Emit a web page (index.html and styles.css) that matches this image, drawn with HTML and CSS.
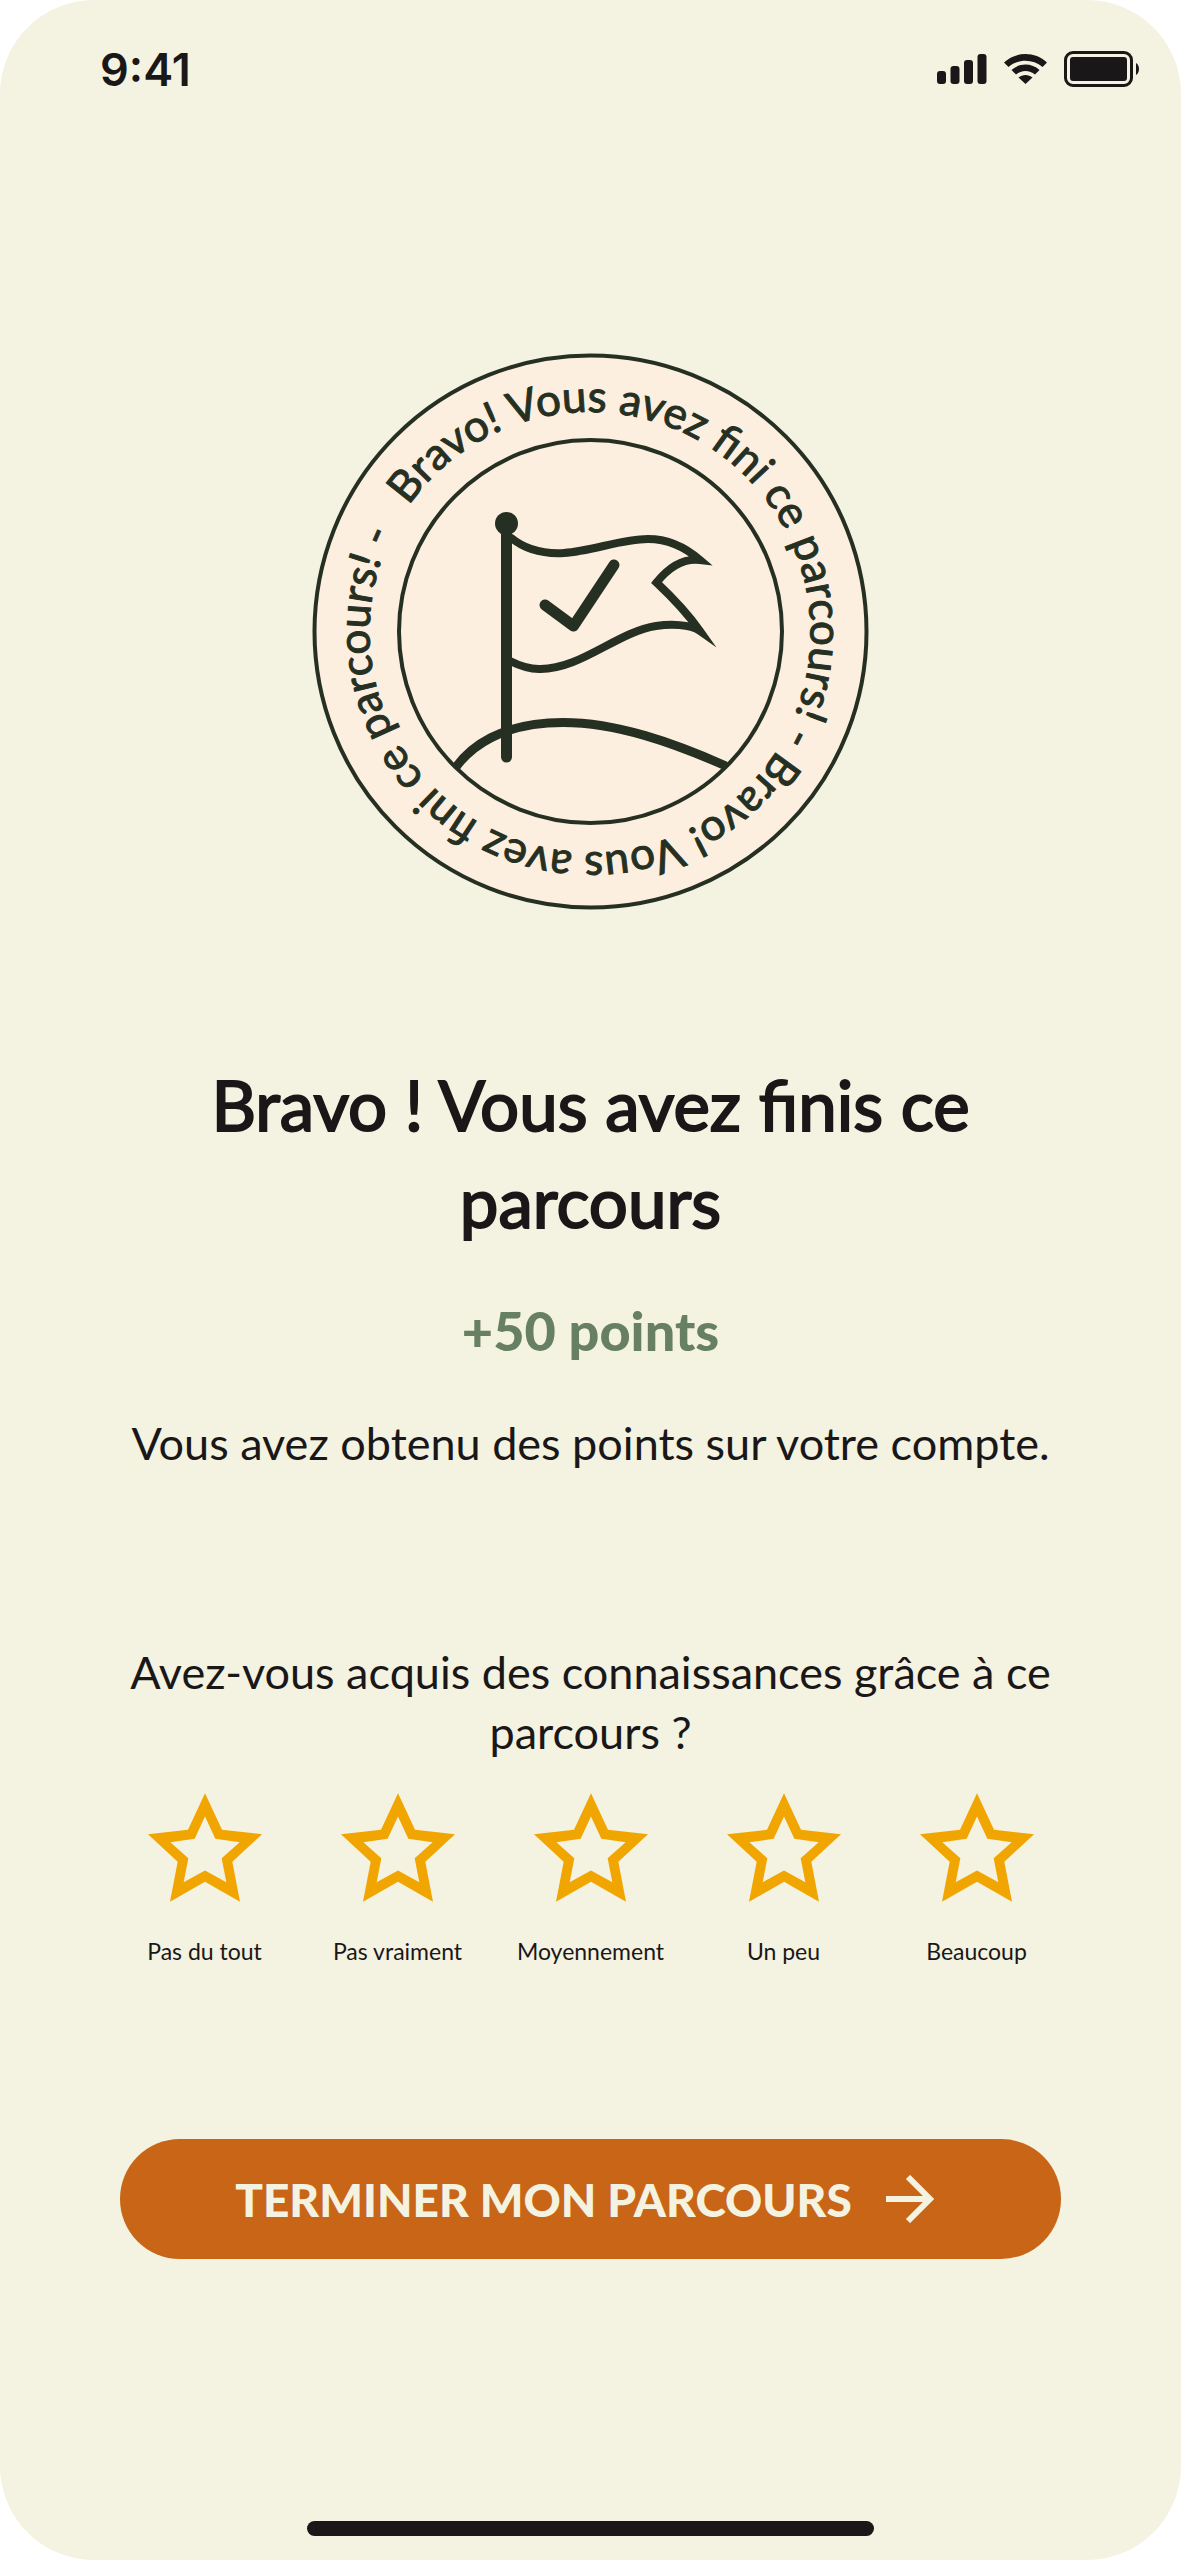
FILE: index.html
```html
<!DOCTYPE html>
<html lang="fr">
<head>
    <meta charset="UTF-8">
    <meta name="viewport" content="width=device-width, initial-scale=1">
    <title>Parcours terminé</title>
    <link rel="stylesheet" href="styles.css">
</head>
<body>
    <svg class="sprite" aria-hidden="true">
        <symbol id="star" viewBox="83 40 342 326">
            <path fill-rule="evenodd" d="M254 40 305 150 425 163 336 246 359 366 254 306 149 366 172 246 83 163 203 150ZM254 110 223 177 150 187 204 235 190 307 254 272 318 307 304 235 358 187 285 177Z"/>
        </symbol>
    </svg>
    <div class="screen">
        <header class="status">
            <span class="time">9:41</span>
            <div class="status-icons">
                <svg width="50" height="30" viewBox="0 0 50 30">
                    <rect x="0" y="17" width="9" height="13" rx="3"/>
                    <rect x="13.5" y="12" width="9" height="18" rx="3"/>
                    <rect x="27" y="6" width="9" height="24" rx="3"/>
                    <rect x="40.5" y="0" width="9" height="30" rx="3"/>
                </svg>
                <svg width="43" height="30" viewBox="0 0 43 30">
                    <path d="M0 8.500C12-2.800 31-2.800 43 8.500L38.500 13C29 4.500 14 4.500 4.500 13Z"/>
                    <path d="M7.500 16C15.500 8.600 27.500 8.600 35.500 16L31 20.500C25.500 15.800 17.500 15.800 12 20.500Z"/>
                    <path d="M14.500 23.500C18.500 20 24.500 20 28.500 23.500L21.500 30Z"/>
                </svg>
                <svg width="75" height="36" viewBox="0 0 75 36">
                    <rect class="outline" x="1.5" y="1.5" width="66" height="33" rx="7.5"/>
                    <rect x="6" y="6" width="57" height="24" rx="3"/>
                    <path d="M72 12C76 14 76 22 72 24Z"/>
                </svg>
            </div>
        </header>
        <main class="content">
            <svg class="badge" viewBox="0 0 557 557">
                <defs>
                    <path id="ring" d="M96.600 153A221 221 0 0 1 460.400 404A221 221 0 0 1 96.600 153"/>
                    <path id="ring2" d="M465.300 396.600A221 221 0 0 1 91.700 160.400A221 221 0 0 1 465.300 396.600"/>
                </defs>
                <circle class="disc" cx="278.5" cy="278.5" r="276"/>
                <circle class="disc" cx="278.5" cy="278.5" r="191.5"/>
                <text><textPath href="#ring">Bravo! Vous avez fini ce parcours! -</textPath></text>
                <text><textPath href="#ring2">Bravo! Vous avez fini ce parcours! -</textPath></text>
                <!-- colline -->
                <path class="hill" d="M144 414C158 395 188 369.500 251 369.500C305 369.500 362 390 414 413"/>
                <!-- drapeau -->
                <circle cx="194.5" cy="170.5" r="11.5"/>
                <path class="pole" d="M194.500 170V404"/>
                <path class="flag" d="M198 184C216 199 235 201 252 200C280 198 310 186 336 186C356 186 373 194 388 207C372 205 357 214 344.500 229.500C361 245 376 261 388 278C378 271 358 271 344 273C305 279 268 317 227 316C217 316 208 313 198 308"/>
                <path class="check" d="M233 252 261.500 273 302 212"/>
            </svg>
            <h1>Bravo ! Vous avez finis ce parcours</h1>
            <p class="points">+50 points</p>
            <p class="text">Vous avez obtenu des points sur votre compte.</p>
            <form class="survey">
                <fieldset>
                    <legend class="text">Avez-vous acquis des connaissances grâce à ce parcours ?</legend>
                    <div class="stars">
                        <label><input type="radio" name="note" value="1"><svg><use href="#star"/></svg>Pas du tout</label>
                        <label><input type="radio" name="note" value="2"><svg><use href="#star"/></svg>Pas vraiment</label>
                        <label><input type="radio" name="note" value="3"><svg><use href="#star"/></svg>Moyennement</label>
                        <label><input type="radio" name="note" value="4"><svg><use href="#star"/></svg>Un peu</label>
                        <label><input type="radio" name="note" value="5"><svg><use href="#star"/></svg>Beaucoup</label>
                    </div>
                </fieldset>
                <button class="btn" type="submit">
                    Terminer mon parcours
                    <svg width="48" height="48" viewBox="0 0 48 48"><path d="M0 24H44M22 2 44 24 22 46"/></svg>
                </button>
            </form>
        </main>
        <div class="home-bar"></div>
    </div>
</body>
</html>
```
FILE: styles.css
```css
*{
    margin: 0;
    padding: 0;
    box-sizing: border-box;
}
body{
    background: #ffffff;
    color: #1a1718;
    font-family: Lato, "Open Sans", sans-serif;
}
.sprite{
    display: none;
}
.screen{
    display: flex;
    flex-direction: column;
    min-height: 100vh;
    padding-bottom: 24px;
    border-radius: 94px;
    background: #f4f2e0;
}

/* barre de statut */
.status{
    display: flex;
    justify-content: space-between;
    align-items: center;
    height: 138px;
    padding: 0 42px 0 100px;
}
.time{
    font-family: Inter, sans-serif;
    font-size: 45px;
    font-weight: 600;
}
.status-icons{
    display: flex;
    align-items: center;
    gap: 17px;
    fill: #1a1718;
}
.outline{
    fill: none;
    stroke: #1a1718;
    stroke-width: 3;
}

.content{
    display: flex;
    flex-direction: column;
    align-items: center;
    flex: 1;
    padding: 215px 108px 0;
    text-align: center;
}

/* badge */
.badge{
    width: 557px;
    max-width: 100%;
    fill: #263022;
}
.badge text{
    font-size: 44px;
    stroke: #263022;
    stroke-width: 1;
}
.disc{
    fill: #fdefe0;
    stroke: #263022;
    stroke-width: 4;
}
.hill, .pole, .flag, .check{
    fill: none;
    stroke: #263022;
    stroke-width: 9;
}
.pole, .check{
    stroke-width: 11;
    stroke-linecap: round;
    stroke-linejoin: round;
}
.flag{
    stroke-width: 8;
    stroke-miterlimit: 10;
}

h1{
    max-width: 860px;
    margin-top: 146px;
    font-size: 69px;
    font-weight: 400;
    line-height: 97px;
    -webkit-text-stroke: 2px #1a1718;
}
.points{
    margin-top: 51px;
    color: #677f62;
    font-size: 54px;
    font-weight: 900;
    line-height: 60px;
}
.text{
    font-size: 45px;
    font-weight: 400;
    line-height: 60px;
}
.points + .text{
    margin-top: 52px;
}

.survey{
    width: 100%;
    margin-top: 169px;
}
fieldset{
    border: none;
}
legend{
    width: 100%;
    text-align: center;
}
.stars{
    display: grid;
    grid-template-columns: repeat(5, 1fr);
    margin-top: 31px;
}
.stars label{
    position: relative;
    display: flex;
    flex-direction: column;
    align-items: center;
    gap: 35px;
    font-size: 23px;
    line-height: 28px;
    cursor: pointer;
}
.stars input{
    position: absolute;
    opacity: 0;
}
.stars svg{
    width: 114px;
    height: 109px;
    fill: #f1a500;
}
.btn{
    display: flex;
    justify-content: center;
    align-items: center;
    gap: 34px;
    width: calc(100% - 24px);
    height: 120px;
    margin: 174px 12px 0;
    padding-right: 12px;
    border: none;
    border-radius: 60px;
    background: #c86517;
    color: #f4f2e0;
    font-family: inherit;
    font-size: 46px;
    font-weight: 900;
    text-transform: uppercase;
    cursor: pointer;
}
.btn svg{
    fill: none;
    stroke: #f4f2e0;
    stroke-width: 6;
}
.home-bar{
    width: 48%;
    height: 15px;
    margin: 0 auto;
    border-radius: 8px;
    background: #1a1718;
}
```
